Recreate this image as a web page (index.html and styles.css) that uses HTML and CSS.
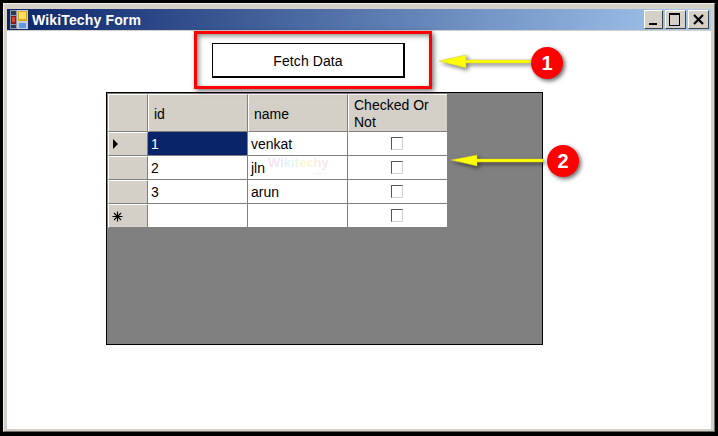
FILE: index.html
```html
<!DOCTYPE html>
<html lang="en">
  <head>
    <meta charset="UTF-8" />
    <title>WikiTechy Form</title>
    <link rel="stylesheet" href="styles.css">
  </head>
  <body>
    <div class="window">
      <div class="title-bar">
        <svg class="app-icon" width="18" height="19" viewBox="0 0 18 19">
          <rect width="18" height="19" fill="#8d97a8" />
          <rect x="1" y="1" width="5" height="4" fill="#2b3a55" />
          <rect x="1" y="6" width="5" height="8" fill="#8a1a1a" />
          <rect x="2" y="7" width="3" height="5" fill="#e04030" />
          <rect x="1" y="15" width="5" height="3" fill="#2b3a55" />
          <rect x="7" y="0" width="11" height="19" fill="#c9ccd2" />
          <rect x="8" y="1" width="9" height="10" fill="#d9a520" />
          <rect x="9" y="2" width="7" height="7" fill="#ffdf60" />
          <rect x="9" y="13" width="7" height="5" fill="#5f97e8" />
        </svg>
        <span class="title-text">WikiTechy Form</span>
        <div class="window-buttons">
          <div class="win-btn">
            <svg width="19" height="19" viewBox="0 0 19 19"><rect x="5" y="13" width="8" height="2" fill="#000" /></svg>
          </div>
          <div class="win-btn win-btn-max">
            <svg width="21" height="19" viewBox="0 0 21 19"><path d="M4 3h11v13H4z M5 5v10h9V5z" fill="#000" fill-rule="evenodd" /></svg>
          </div>
          <div class="win-btn win-btn-max">
            <svg width="21" height="19" viewBox="0 0 21 19"><path d="M6 5l9 9M15 5l-9 9" stroke="#000" stroke-width="2.2" /></svg>
          </div>
        </div>
      </div>

      <div class="form-body">
        <button class="fetch-button"><span class="fetch-label">Fetch Data</span></button>

        <div class="grid-view">
          <span class="watermark">Wikitechy</span>
          <span class="watermark-com">.com</span>
          <table>
            <thead>
              <tr>
                <th class="row-head"></th>
                <th>id</th>
                <th>name</th>
                <th class="col-check">Checked Or Not</th>
              </tr>
            </thead>
            <tbody>
              <tr>
                <td class="row-head"><span class="row-pointer"></span></td>
                <td class="selected">1</td>
                <td>venkat</td>
                <td class="col-check"><span class="check-box"></span></td>
              </tr>
              <tr>
                <td class="row-head"></td>
                <td>2</td>
                <td>jln</td>
                <td class="col-check"><span class="check-box"></span></td>
              </tr>
              <tr>
                <td class="row-head"></td>
                <td>3</td>
                <td>arun</td>
                <td class="col-check"><span class="check-box"></span></td>
              </tr>
              <tr>
                <td class="row-head">
                  <svg class="new-row" width="11" height="11" viewBox="0 0 11 11">
                    <path d="M5.5 0.5v10M0.5 5.5h10M2 2l7 7M9 2l-7 7" stroke="#000" stroke-width="1.1" />
                  </svg>
                </td>
                <td></td>
                <td></td>
                <td class="col-check"><span class="check-box"></span></td>
              </tr>
            </tbody>
          </table>
        </div>
      </div>
    </div>

    <!-- annotations on top of the screenshot -->
    <div class="red-box"></div>
    <svg class="notes" width="718" height="436" viewBox="0 0 718 436">
      <g class="arrow">
        <path d="M531 60h-65v-5l-27 6 27 7v-5h65z" />
      </g>
      <g class="arrow">
        <path d="M543 159h-66v-4l-26 5 26 6v-4h66z" />
      </g>
      <circle class="badge" cx="547" cy="63" r="16" />
      <circle class="badge" cx="563" cy="161" r="16" />
      <text class="badge-num" x="547" y="70">1</text>
      <text class="badge-num" x="563" y="168">2</text>
    </svg>
  </body>
</html>
```

FILE: styles.css
```css
html,
body {
  margin: 0;
  height: 100%;
}

body {
  width: 718px;
  height: 436px;
  overflow: hidden;
  position: relative;
  background-color: #000;
  font-family: "Liberation Sans", Arial, sans-serif;
}

.window {
  box-sizing: border-box;
  width: 712px;
  height: 429px;
  margin: 3px 0 0 3px;
  padding: 5px 3px 2px 3px;
  display: flex;
  flex-direction: column;
  background-color: #d4d0c8;
  border-top: 1px solid #f2f0ea;
  border-left: 1px solid #f2f0ea;
  border-right: 1px solid #6e6c66;
  border-bottom: 1px solid #6e6c66;
}

.title-bar {
  height: 21px;
  flex-shrink: 0;
  display: flex;
  align-items: center;
  margin-bottom: 1px;
  padding-right: 2px;
  background: linear-gradient(to right, #0a246a, #a6caf0);
}

.app-icon {
  margin-left: 3px;
  margin-right: 4px;
}

.title-text {
  flex-grow: 1;
  color: #fff;
  font-size: 14px;
  font-weight: bold;
  letter-spacing: 0.15px;
}

.window-buttons {
  display: flex;
  gap: 2px;
}

.win-btn {
  box-sizing: border-box;
  width: 19px;
  height: 19px;
  background-color: #d4d0c8;
  border-top: 1px solid #fff;
  border-left: 1px solid #fff;
  border-right: 1px solid #404040;
  border-bottom: 1px solid #404040;
  overflow: hidden;
}

.win-btn svg {
  display: block;
  margin: -1px 0 0 -1px;
}

.win-btn-max {
  width: 21px;
}

.form-body {
  flex-grow: 1;
  background-color: #fff;
  padding: 12px 0 0 99px;
}

.fetch-button {
  display: block;
  box-sizing: border-box;
  width: 193px;
  height: 35px;
  margin-left: 106px;
  margin-bottom: 14px;
  padding: 2px 0 0 0;
  background-color: #fff;
  border: 1px solid #000;
  border-right-width: 2px;
  border-bottom-width: 2px;
  color: #000;
  font-family: "Liberation Sans", Arial, sans-serif;
  font-size: 14px;
}

.fetch-label {
  letter-spacing: 0.1px;
}

.grid-view {
  box-sizing: border-box;
  position: relative;
  width: 437px;
  height: 253px;
  background-color: #808080;
  border: 1px solid #000;
  padding: 1px;
}

.watermark {
  position: absolute;
  left: 161px;
  top: 63px;
  z-index: 1;
  font-size: 13px;
  font-weight: bold;
  line-height: 14px;
  background: linear-gradient(to right, #fbdcf3, #d9f5fb 35%, #fff7c9 60%, #f6e0f5);
  -webkit-background-clip: text;
  background-clip: text;
  color: transparent;
}

.watermark-com {
  position: absolute;
  left: 205px;
  top: 77px;
  z-index: 1;
  font-size: 6px;
  line-height: 6px;
  color: #eef0f6;
}

table {
  border-collapse: separate;
  border-spacing: 0;
  table-layout: fixed;
  width: 339px;
  font-size: 14px;
  color: #000;
}

th {
  box-sizing: border-box;
  height: 38px;
  padding: 2px 5px 0 5px;
  width: 100px;
  background-color: #d4d0c8;
  border-top: 1px solid #fff;
  border-left: 1px solid #fff;
  border-right: 1px solid #808080;
  border-bottom: 1px solid #808080;
  font-weight: normal;
  text-align: left;
  line-height: 17px;
}

th:last-child {
  border-right: none;
  width: 99px;
}

td {
  box-sizing: border-box;
  height: 24px;
  padding: 0 3px;
  background-color: #fff;
  border-right: 1px solid #808080;
  border-bottom: 1px solid #808080;
}

td:last-child {
  border-right: none;
}

td.row-head,
th.row-head {
  width: 40px;
  padding: 0;
  background-color: #d4d0c8;
  border-top: 1px solid #fff;
  border-left: 1px solid #fff;
}

td.selected {
  background-color: #0a246a;
  color: #fff;
}

.col-check {
  text-align: center;
}

th.col-check {
  text-align: left;
}

.check-box {
  display: block;
  box-sizing: border-box;
  width: 12px;
  height: 13px;
  margin-left: 40px;
  background-color: #fff;
  border-top: 1px solid #555;
  border-left: 1px solid #555;
  border-right: 1px solid #d4d0c8;
  border-bottom: 1px solid #d4d0c8;
}

.row-pointer {
  display: block;
  width: 0;
  height: 0;
  margin-left: 4px;
  border-left: 5px solid #000;
  border-top: 5px solid transparent;
  border-bottom: 5px solid transparent;
}

.new-row {
  display: block;
  margin-left: 3px;
}

.red-box {
  position: absolute;
  left: 194px;
  top: 31px;
  box-sizing: border-box;
  width: 238px;
  height: 58px;
  border: 3px solid #f00;
  box-shadow: 2px 2px 5px rgba(0, 0, 0, 0.55), inset 2px 2px 5px rgba(0, 0, 0, 0.45);
}

.notes {
  position: absolute;
  left: 0;
  top: 0;
}

.arrow {
  fill: #ffff00;
  stroke: #c9c93a;
  stroke-width: 0.5;
  filter: drop-shadow(2px 2px 2px rgba(0, 0, 0, 0.55));
}

.badge {
  fill: #f00;
  filter: drop-shadow(2px 2px 2px rgba(0, 0, 0, 0.6));
}

.badge-num {
  fill: #fff;
  font-family: "Liberation Sans", Arial, sans-serif;
  font-size: 20px;
  font-weight: bold;
  text-anchor: middle;
}
```
